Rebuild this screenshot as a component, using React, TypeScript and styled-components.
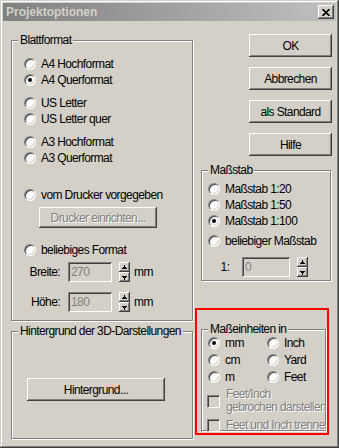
import React from 'react';
import styled, { createGlobalStyle, css } from 'styled-components';

const face = '#d4d0c8';

const GlobalStyle = createGlobalStyle`
  * { box-sizing: border-box; }
  html, body { margin: 0; padding: 0; background: ${face}; }
  body {
    font-family: "Liberation Sans", Arial, sans-serif;
    font-size: 12px;
    letter-spacing: -0.6px;
    color: #000;
  }
`;

const raised = css`
  box-shadow: inset -1px -1px #404040, inset 1px 1px #ffffff, inset -2px -2px #808080;
`;

const sunken = css`
  box-shadow: inset 1px 1px #808080, inset -1px -1px #ffffff, inset 2px 2px #404040,
    inset -2px -2px ${face};
`;

const disabledText = css`
  color: #808080;
  text-shadow: 1px 1px 0 #ffffff;
`;

const Window = styled.div`
  width: 339px;
  height: 448px;
  padding: 3px;
  display: flex;
  flex-direction: column;
  background: ${face};
  box-shadow: inset -1px -1px #404040, inset 1px 1px ${face}, inset -2px -2px #808080,
    inset 2px 2px #ffffff;
`;

const TitleBar = styled.div`
  height: 18px;
  display: flex;
  align-items: center;
  justify-content: space-between;
  padding: 0 2px 0 3px;
  background: linear-gradient(to right, #808080, #c0c0c0);
`;

const Title = styled.span`
  font-weight: bold;
  font-size: 12px;
  letter-spacing: 0;
  color: ${face};
`;

const CloseButton = styled.div`
  width: 16px;
  height: 14px;
  display: flex;
  align-items: center;
  justify-content: center;
  background: ${face};
  ${raised}
`;

const Body = styled.div`
  display: flex;
  align-items: flex-start;
  padding-left: 8px;
`;

const Column = styled.div<{ $w: number; $mt?: number; $ml?: number }>`
  width: ${(p) => p.$w}px;
  margin-top: ${(p) => p.$mt ?? 0}px;
  margin-left: ${(p) => p.$ml ?? 0}px;
  display: flex;
  flex-direction: column;
`;

const Group = styled.div<{ $w: number; $h: number; $mt?: number; $pt: number; $pl: number }>`
  position: relative;
  width: ${(p) => p.$w}px;
  height: ${(p) => p.$h}px;
  margin-top: ${(p) => p.$mt ?? 0}px;
  padding: ${(p) => p.$pt}px 0 0 ${(p) => p.$pl}px;
  border: 1px solid #808080;
  box-shadow: inset 1px 1px #ffffff, 1px 1px #ffffff;
  display: flex;
  flex-direction: column;
  align-items: flex-start;
`;

const Legend = styled.span`
  position: absolute;
  top: -7px;
  left: 6px;
  padding: 0 2px;
  line-height: 13px;
  white-space: nowrap;
  background: ${face};
`;

const Option = styled.div<{ $mt?: number }>`
  height: 16px;
  margin-top: ${(p) => p.$mt ?? 0}px;
  display: flex;
  align-items: center;
  gap: 5px;
  white-space: nowrap;
`;

const RadioCircle = styled.span<{ $checked?: boolean }>`
  position: relative;
  flex: none;
  width: 12px;
  height: 12px;
  border-radius: 50%;
  background: #ffffff;
  border: 1px solid;
  border-color: #808080 #ffffff #ffffff #808080;
  box-shadow: inset 1px 1px #404040, inset -1px -1px ${face};

  &::after {
    content: '';
    display: ${(p) => (p.$checked ? 'block' : 'none')};
    position: absolute;
    left: 3px;
    top: 3px;
    width: 4px;
    height: 4px;
    border-radius: 50%;
    background: #000000;
  }
`;

const Button = styled.div<{ $w: number; $h: number; $mt?: number; $ml?: number; $disabled?: boolean }>`
  width: ${(p) => p.$w}px;
  height: ${(p) => p.$h}px;
  margin-top: ${(p) => p.$mt ?? 0}px;
  margin-left: ${(p) => p.$ml ?? 0}px;
  display: flex;
  align-items: center;
  justify-content: center;
  background: ${face};
  white-space: nowrap;
  ${raised}
  ${(p) => p.$disabled && disabledText}
`;

const ButtonStack = styled.div`
  align-self: flex-end;
  margin-top: 13px;
  display: flex;
  flex-direction: column;
  gap: 10px;
`;

const FieldRow = styled.div<{ $mt: number }>`
  height: 20px;
  margin-top: ${(p) => p.$mt}px;
  display: flex;
  align-items: center;
`;

const FieldLabel = styled.span<{ $w: number; $align?: string }>`
  width: ${(p) => p.$w}px;
  text-align: ${(p) => p.$align ?? 'right'};
  flex: none;
`;

const TextBox = styled.div<{ $w: number; $ml: number }>`
  width: ${(p) => p.$w}px;
  height: 20px;
  margin-left: ${(p) => p.$ml}px;
  padding-left: 3px;
  display: flex;
  align-items: center;
  color: #808080;
  background: ${face};
  ${sunken}
`;

const Spinner = styled.div<{ $ml: number }>`
  width: 11px;
  height: 20px;
  margin-left: ${(p) => p.$ml}px;
  display: flex;
  flex-direction: column;
`;

const SpinButton = styled.div`
  height: 10px;
  display: flex;
  align-items: center;
  justify-content: center;
  background: ${face};
  ${raised}
`;

const Unit = styled.span`
  margin-left: 4px;
`;

const Highlight = styled.div`
  width: 134px;
  height: 127px;
  margin-top: 27px;
  margin-left: -6px;
  padding: 19px 0 0 4px;
  border: 2px solid #ff0000;
`;

const UnitGrid = styled.div`
  display: grid;
  grid-template-columns: 59px 1fr;
  grid-auto-rows: 17px;
`;

const CheckRow = styled.div<{ $mt: number }>`
  margin-top: ${(p) => p.$mt}px;
  margin-left: -1px;
  display: flex;
  align-items: center;
  gap: 6px;
`;

const CheckBox = styled.span`
  flex: none;
  width: 13px;
  height: 13px;
  background: ${face};
  border: 1px solid;
  border-color: #808080 #ffffff #ffffff #808080;
  box-shadow: inset 1px 1px #404040, inset -1px -1px ${face};
`;

const CheckLabel = styled.span`
  width: 100px;
  line-height: 13px;
  white-space: nowrap;
  overflow: hidden;
  ${disabledText}
`;

const Radio = ({ label, checked, mt }: { label: string; checked?: boolean; mt?: number }) => (
  <Option $mt={mt}>
    <RadioCircle $checked={checked} />
    <span>{label}</span>
  </Option>
);

const Arrow = ({ down }: { down?: boolean }) => (
  <svg width='5' height='5' viewBox='0 0 5 5' style={{ transform: down ? 'scaleY(-1)' : undefined }}>
    <rect x='2' y='0' width='1' height='2' fill='#000' />
    <rect x='1' y='2' width='3' height='1' fill='#000' />
    <rect x='0' y='3' width='5' height='1' fill='#000' />
  </svg>
);

const Spin = ({ ml }: { ml: number }) => (
  <Spinner $ml={ml}>
    <SpinButton>
      <Arrow />
    </SpinButton>
    <SpinButton>
      <Arrow down />
    </SpinButton>
  </Spinner>
);

const App = () => {
  return (
    <>
      <GlobalStyle />
      <Window>
        <TitleBar>
          <Title>Projektoptionen</Title>
          <CloseButton>
            <svg width='8' height='7' viewBox='0 0 8 7'>
              <path d='M0.5 0 L7.5 7 M7.5 0 L0.5 7' stroke='#000' strokeWidth='1.6' />
            </svg>
          </CloseButton>
        </TitleBar>
        <Body>
          <Column $w={182} $mt={19}>
            <Group $w={182} $h={281} $pt={15} $pl={12}>
              <Legend>Blattformat</Legend>
              <Radio label='A4 Hochformat' />
              <Radio label='A4 Querformat' checked />
              <Radio label='US Letter' mt={7} />
              <Radio label='US Letter quer' />
              <Radio label='A3 Hochformat' mt={7} />
              <Radio label='A3 Querformat' />
              <Radio label='vom Drucker vorgegeben' mt={21} />
              <Button $w={118} $h={21} $mt={4} $ml={15} $disabled>
                Drucker einrichten...
              </Button>
              <Radio label='beliebiges Format' mt={14} />
              <FieldRow $mt={4}>
                <FieldLabel $w={36}>Breite:</FieldLabel>
                <TextBox $w={44} $ml={8}>270</TextBox>
                <Spin ml={7} />
                <Unit>mm</Unit>
              </FieldRow>
              <FieldRow $mt={10}>
                <FieldLabel $w={36}>Höhe:</FieldLabel>
                <TextBox $w={44} $ml={8}>180</TextBox>
                <Spin ml={7} />
                <Unit>mm</Unit>
              </FieldRow>
            </Group>
            <Group $w={182} $h={108} $mt={10} $pt={46} $pl={15}>
              <Legend>Hintergrund der 3D-Darstellungen</Legend>
              <Button $w={138} $h={23}>
                Hintergrund...
              </Button>
            </Group>
          </Column>
          <Column $w={131} $ml={8}>
            <ButtonStack>
              <Button $w={83} $h={23}>OK</Button>
              <Button $w={83} $h={23}>Abbrechen</Button>
              <Button $w={83} $h={23}>als Standard</Button>
              <Button $w={83} $h={23}>Hilfe</Button>
            </ButtonStack>
            <Group $w={130} $h={111} $mt={14} $pt={10} $pl={6}>
              <Legend>Maßstab</Legend>
              <Radio label='Maßstab 1:20' />
              <Radio label='Maßstab 1:50' />
              <Radio label='Maßstab 1:100' checked />
              <Radio label='beliebiger Maßstab' mt={4} />
              <FieldRow $mt={8}>
                <FieldLabel $w={34} $align='center'>1:</FieldLabel>
                <TextBox $w={48} $ml={0}>0</TextBox>
                <Spin ml={7} />
              </FieldRow>
            </Group>
            <Highlight>
              <Group $w={125} $h={102} $pt={5} $pl={6}>
                <Legend>Maßeinheiten in</Legend>
                <UnitGrid>
                  <Radio label='mm' checked />
                  <Radio label='Inch' />
                  <Radio label='cm' />
                  <Radio label='Yard' />
                  <Radio label='m' />
                  <Radio label='Feet' />
                </UnitGrid>
                <CheckRow $mt={2}>
                  <CheckBox />
                  <CheckLabel>
                    Feet/Inch
                    <br />
                    gebrochen darstellen
                  </CheckLabel>
                </CheckRow>
                <CheckRow $mt={5}>
                  <CheckBox />
                  <CheckLabel>Feet und Inch trennen</CheckLabel>
                </CheckRow>
              </Group>
            </Highlight>
          </Column>
        </Body>
      </Window>
    </>
  );
};

export default App;
